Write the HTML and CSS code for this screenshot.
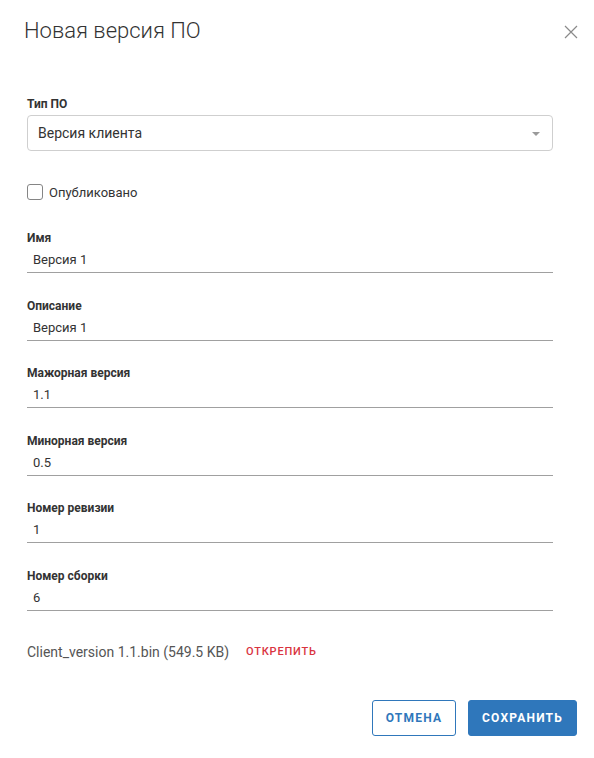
FILE: index.html
```html
<!DOCTYPE html>
<html lang="ru">
<head>
<meta charset="utf-8">
<title>Новая версия ПО</title>
<link rel="stylesheet" href="styles.css">
</head>
<body>
<div class="dialog">
  <header class="dialog-header">
    <h1 class="dialog-title">Новая версия ПО</h1>
    <button class="close-btn" type="button" aria-label="Закрыть">
      <svg width="14" height="14" viewBox="0 0 14 14"><path d="M1 1L13 13M13 1L1 13" stroke="#8a8a8a" stroke-width="1.2" fill="none"/></svg>
    </button>
  </header>

  <form class="dialog-body">
    <div class="select-field">
      <label class="field-label">Тип ПО</label>
      <div class="select">
        <span class="select-value">Версия клиента</span>
        <span class="select-caret"></span>
      </div>
    </div>

    <label class="checkbox-row">
      <span class="checkbox"></span>
      <span class="checkbox-text">Опубликовано</span>
    </label>

    <div class="fields">
      <div class="field">
        <label class="field-label">Имя</label>
        <div class="input">Версия 1</div>
      </div>
      <div class="field">
        <label class="field-label">Описание</label>
        <div class="input">Версия 1</div>
      </div>
      <div class="field">
        <label class="field-label">Мажорная версия</label>
        <div class="input">1.1</div>
      </div>
      <div class="field">
        <label class="field-label">Минорная версия</label>
        <div class="input">0.5</div>
      </div>
      <div class="field">
        <label class="field-label">Номер ревизии</label>
        <div class="input">1</div>
      </div>
      <div class="field">
        <label class="field-label">Номер сборки</label>
        <div class="input">6</div>
      </div>
    </div>

    <div class="file-row">
      <span class="file-name">Client_version 1.1.bin (549.5 KB)</span>
      <span class="file-detach">Открепить</span>
    </div>
  </form>

  <footer class="dialog-footer">
    <button class="btn btn-outline" type="button">Отмена</button>
    <button class="btn btn-primary" type="button">Сохранить</button>
  </footer>
</div>
</body>
</html>
```
FILE: styles.css
```css
html, body {
  margin: 0;
  padding: 0;
  background: #fff;
}

body {
  font-family: Roboto, "Liberation Sans", sans-serif;
  color: #333;
}

.dialog {
  width: 594px;
  height: 758px;
  box-sizing: border-box;
}

.dialog-header {
  display: flex;
  align-items: center;
  justify-content: space-between;
  padding: 19px 16px 0 24px;
  height: 24px;
}

.dialog-title {
  margin: 0;
  font-size: 22px;
  font-weight: 300;
  line-height: 24px;
  color: #333;
}

.close-btn {
  border: 0;
  background: none;
  padding: 0;
  width: 14px;
  height: 14px;
  display: flex;
  margin-top: 2px;
  cursor: pointer;
}

.dialog-body {
  padding: 54px 41px 0 27px;
  display: flex;
  flex-direction: column;
}

.field-label {
  display: block;
  font-size: 12px;
  font-weight: 700;
  line-height: 14px;
  color: #333;
}

.select-field .field-label {
  margin-bottom: 4px;
}

.select {
  height: 36px;
  box-sizing: border-box;
  border: 1px solid #cfcfcf;
  border-radius: 4px;
  display: flex;
  align-items: center;
  justify-content: space-between;
  padding: 0 12px 0 10px;
}

.select-value {
  font-size: 14px;
  color: #333;
}

.select-caret {
  width: 0;
  height: 0;
  border-left: 4px solid transparent;
  border-right: 4px solid transparent;
  border-top: 4px solid #9a9a9a;
  margin-top: 1px;
}

.checkbox-row {
  display: flex;
  align-items: center;
  gap: 6px;
  margin-top: 33px;
  height: 16px;
}

.checkbox {
  width: 16px;
  height: 16px;
  box-sizing: border-box;
  border: 1px solid #858585;
  border-radius: 3px;
}

.checkbox-text {
  font-size: 13px;
  color: #333;
}

.fields {
  display: flex;
  flex-direction: column;
  gap: 25.6px;
  margin-top: 31px;
}

.field .field-label {
  margin-bottom: 3px;
}

.input {
  height: 25px;
  box-sizing: border-box;
  border-bottom: 1px solid #a0a0a0;
  padding: 0 6px;
  font-size: 13px;
  line-height: 24px;
  color: #333;
}

.file-row {
  display: flex;
  align-items: center;
  gap: 17px;
  margin-top: 33px;
  height: 16px;
}

.file-name {
  font-size: 14px;
  color: #555;
}

.file-detach {
  font-size: 11px;
  font-weight: 500;
  letter-spacing: 0.8px;
  text-transform: uppercase;
  color: #d9343f;
}

.dialog-footer {
  display: flex;
  justify-content: flex-end;
  gap: 12px;
  padding: 40px 17px 0 0;
}

.btn {
  height: 36px;
  box-sizing: border-box;
  border-radius: 3px;
  font-family: Roboto, "Liberation Sans", sans-serif;
  font-size: 12px;
  font-weight: 700;
  letter-spacing: 1.2px;
  text-transform: uppercase;
  cursor: pointer;
}

.btn-outline {
  width: 84px;
  background: #fff;
  border: 1px solid #2f77bb;
  color: #2f77bb;
}

.btn-primary {
  width: 109px;
  background: #2f77bb;
  border: 1px solid #2f77bb;
  color: #fff;
}
```
